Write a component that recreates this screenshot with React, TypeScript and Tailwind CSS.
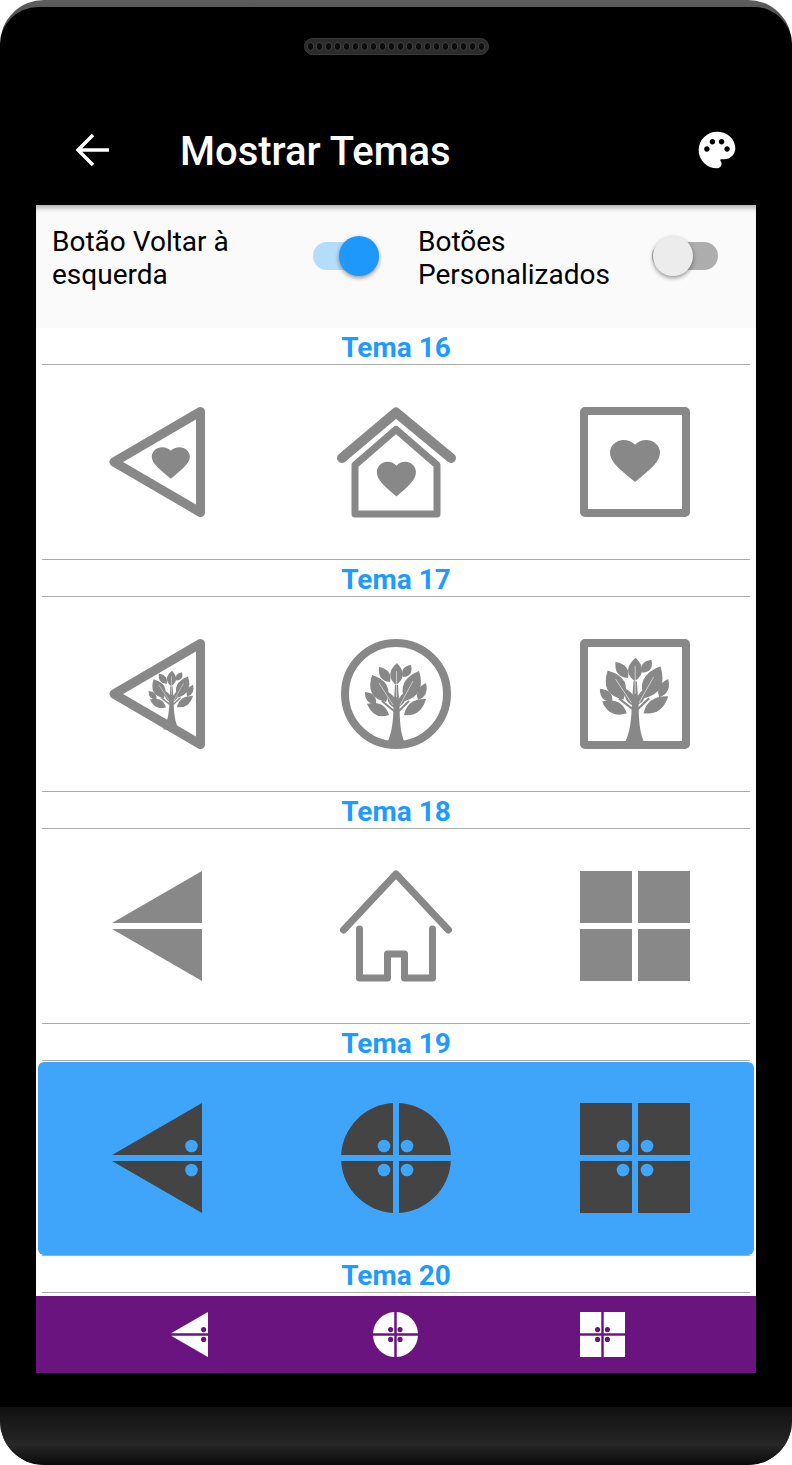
import type { ReactNode } from 'react'
import { MdPalette } from 'react-icons/md'

const HEART = 'M12 21.35l-1.45-1.32C5.4 15.36 2 12.28 2 8.5 2 5.42 4.42 3 7.5 3c1.74 0 3.41.81 4.5 2.09C13.09 3.81 14.76 3 16.5 3 19.58 3 22 5.42 22 8.5c0 3.78-3.4 6.86-8.55 11.54L12 21.35z'

/* leaf between two points, w = widest part */
function leaf(x1: number, y1: number, x2: number, y2: number, w: number) {
  const mx = x1 + (x2 - x1) * 0.55
  const my = y1 + (y2 - y1) * 0.55
  const len = Math.hypot(x2 - x1, y2 - y1)
  const nx = (-(y2 - y1) / len) * w * 1.05
  const ny = ((x2 - x1) / len) * w * 1.05
  return `M${x1} ${y1}Q${mx + nx} ${my + ny} ${x2} ${y2}Q${mx - nx} ${my - ny} ${x1} ${y1}Z`
}

const LEAVES = [
  leaf(56, 24, 55, 46, 12),
  leaf(31, 36, 45, 63, 16),
  leaf(78, 32, 64, 62, 16),
  leaf(38, 28, 49, 43, 9),
  leaf(70, 26, 62, 38, 8),
  leaf(24, 53, 35, 65, 8),
  leaf(85, 44, 77, 61, 8),
  leaf(26, 65, 48, 76, 11),
  leaf(85, 60, 63, 76, 11),
  leaf(47, 53, 54, 69, 7),
  leaf(64, 53, 58, 68, 6),
]

function Tree({ transform }: { transform?: string }) {
  return (
    <g transform={transform}>
      {LEAVES.map((d, i) => (
        <path key={i} d={d} />
      ))}
      <path d="M44 108C50 97 52 88 52.5 68L54 46H57L58.5 68C59 88 60 97 66 108Z" />
      <path d="M53 72 41 62M58 72 68 62" fill="none" stroke="currentColor" strokeWidth="2" />
      <path d="M52 66 38 44M59 66 72 42M55.5 58V32" fill="none" stroke="white" strokeWidth="0.8" strokeOpacity="0.7" />
    </g>
  )
}

function Icon({ children, size = 110 }: { children: ReactNode; size?: number }) {
  return (
    <svg width={size} height={size} viewBox="0 0 110 110" className="overflow-visible" fill="currentColor">
      {children}
    </svg>
  )
}

/* ─── Outline shapes ─── */
function TriangleOutline() {
  return <path d="M12 55 98.5 4.5V105.5Z" fill="none" stroke="currentColor" strokeWidth="9" strokeLinejoin="round" />
}

function SquareOutline() {
  return <rect x="4" y="4" width="102" height="102" rx="1" fill="none" stroke="currentColor" strokeWidth="8" strokeLinejoin="round" />
}

function QuadTriangle() {
  return (
    <>
      <path d="M10 52 100 0V52Z" />
      <path d="M10 58H100V110Z" />
    </>
  )
}

function QuadCircle() {
  return (
    <>
      <path d="M52 52H0.1A55 55 0 0 1 52 0.1Z" />
      <path d="M58 52V0.1A55 55 0 0 1 109.9 52Z" />
      <path d="M52 58V109.9A55 55 0 0 1 0.1 58Z" />
      <path d="M58 58H109.9A55 55 0 0 1 58 109.9Z" />
    </>
  )
}

function QuadSquare() {
  return (
    <>
      <rect width="52" height="52" />
      <rect x="58" width="52" height="52" />
      <rect y="58" width="52" height="52" />
      <rect x="58" y="58" width="52" height="52" />
    </>
  )
}

function Dots({ xs, color }: { xs: number[]; color: string }) {
  return (
    <>
      {xs.map((x) => (
        <g key={x} fill={color}>
          <circle cx={x} cy="43" r="6.3" />
          <circle cx={x} cy="67" r="6.3" />
        </g>
      ))}
    </>
  )
}

/* ─── Rows ─── */
function Label({ children }: { children: ReactNode }) {
  return (
    <div className="h-[36px] pt-[3px] flex items-center justify-center font-bold text-[28px] text-[#1e9bfc]">
      {children}
    </div>
  )
}

function Line() {
  return <div className="h-px mx-[6px] bg-[#ababab]" />
}

function IconRow({ children, active }: { children: ReactNode; active?: boolean }) {
  return (
    <div
      className={
        active
          ? 'mx-[2px] mt-px h-[193px] pb-[1px] grid grid-cols-3 place-items-center rounded-[6px] bg-[#3fa5fa] text-[#444444]'
          : 'mx-[2px] h-[194px] grid grid-cols-3 place-items-center text-[#888888]'
      }
    >
      {children}
    </div>
  )
}

function Toggle({ on }: { on?: boolean }) {
  return (
    <div className={`relative w-[66px] h-[28px] rounded-full ${on ? 'bg-[#b3dcfd]' : 'bg-[#adadad]'}`}>
      <div
        className={`absolute top-[-6px] w-[40px] h-[40px] rounded-full shadow-[0_2px_4px_rgba(0,0,0,0.4)] ${
          on ? 'right-0 bg-[#1e98fa]' : 'left-px bg-[#ececec]'
        }`}
      />
    </div>
  )
}

function Speaker() {
  return (
    <div className="mx-auto w-[185px] h-[17px] rounded-full bg-[#2b2b2b] border border-[#3a3a3a] flex items-center justify-center gap-[1.5px]">
      {Array.from({ length: 20 }).map((_, i) => (
        <span key={i} className="w-[7.5px] h-[9px] rounded-full bg-[#0c0c0c] border border-[#444444]" />
      ))}
    </div>
  )
}

export default function App() {
  return (
    <div className="w-[792px] h-[1465px] bg-white font-['Roboto',sans-serif]">
      <div className="h-full rounded-[44px] overflow-hidden flex flex-col bg-[linear-gradient(#5e5e5e,#2a2a2a_60px)]">
        <div className="mt-[7px] h-[1400px] rounded-t-[38px] bg-black flex flex-col shrink-0">
          <div className="pt-[31px]">
            <Speaker />
          </div>

          {/* header */}
          <div className="mt-[62px] mx-[36px] h-[88px] pb-[20px] flex items-center shrink-0">
            <svg width="36" height="36" viewBox="0 0 36 36" className="ml-[39px] mb-[3px]" fill="none" stroke="white" strokeWidth="3.5">
              <path d="M34 18H4M18 3 3 18 18 33" />
            </svg>
            <h1 className="ml-[69px] mt-[1px] text-[40px] font-medium text-white leading-none">Mostrar Temas</h1>
            <div className="ml-auto mr-[17px] mb-[3px] text-white">
              <MdPalette size={44} />
            </div>
          </div>

          <div className="mx-[36px] flex-1 flex flex-col">
            {/* toggles */}
            <div className="h-[123px] bg-[#fafafa] shadow-[inset_0_6px_5px_-3px_rgba(0,0,0,0.3)] flex pt-[20px] text-[28px] leading-[33px] text-black">
              <div className="w-[382px] pl-[16px] pr-[39px] flex justify-between">
                <span className="w-[210px]">Botão Voltar à esquerda</span>
                <div className="mt-[17px]"><Toggle on /></div>
              </div>
              <div className="flex-1 pr-[38px] flex justify-between">
                <span className="w-[210px]">Botões Personalizados</span>
                <div className="mt-[17px]"><Toggle /></div>
              </div>
            </div>

            {/* list */}
            <div className="bg-white pb-[3px]">
              <Label>Tema 16</Label>
              <Line />
              <IconRow>
                <Icon>
                  <TriangleOutline />
                  <path d={HEART} transform="translate(46 35) scale(1.9 1.72)" />
                </Icon>
                <Icon>
                  <path d="M1 51 55 5.5 110 51" fill="none" stroke="currentColor" strokeWidth="10" strokeLinecap="round" strokeLinejoin="round" />
                  <path d="M14 58 55 22.5 96 58V107H14Z" fill="none" stroke="currentColor" strokeWidth="7" strokeLinejoin="round" />
                  <path d={HEART} transform="translate(32 49) scale(1.95 1.9)" />
                </Icon>
                <Icon>
                  <SquareOutline />
                  <path d={HEART} transform="translate(25 26) scale(2.5 2.3)" />
                </Icon>
              </IconRow>
              <Line />

              <Label>Tema 17</Label>
              <Line />
              <IconRow>
                <Icon>
                  <TriangleOutline />
                  <Tree transform="translate(29 15) scale(0.73 0.7)" />
                </Icon>
                <Icon>
                  <circle cx="55" cy="55" r="51" fill="none" stroke="currentColor" strokeWidth="8" />
                  <Tree />
                </Icon>
                <Icon>
                  <SquareOutline />
                  <Tree transform="translate(-7 -7) scale(1.12 1.07)" />
                </Icon>
              </IconRow>
              <Line />

              <Label>Tema 18</Label>
              <Line />
              <IconRow>
                <Icon><QuadTriangle /></Icon>
                <Icon>
                  <path
                    d="M2.5 59 55 3 107.5 59M18.5 58V107H46.5V83H63.5V107H91.5V58"
                    fill="none"
                    stroke="currentColor"
                    strokeWidth="7"
                    strokeLinecap="round"
                    strokeLinejoin="round"
                  />
                </Icon>
                <Icon><QuadSquare /></Icon>
              </IconRow>
              <Line />

              <Label>Tema 19</Label>
              <Line />
              <IconRow active>
                <Icon>
                  <QuadTriangle />
                  <Dots xs={[89.5]} color="#3fa5fa" />
                </Icon>
                <Icon>
                  <QuadCircle />
                  <Dots xs={[43, 66]} color="#3fa5fa" />
                </Icon>
                <Icon>
                  <QuadSquare />
                  <Dots xs={[43, 67]} color="#3fa5fa" />
                </Icon>
              </IconRow>
              <Line />

              <Label>Tema 20</Label>
              <Line />
            </div>

            {/* bottom nav */}
            <div className="h-[77px] pr-[1px] bg-[#6a1480] flex items-center justify-center gap-[161.5px] text-white">
              <Icon size={45}>
                <QuadTriangle />
                <Dots xs={[89.5]} color="#6a1480" />
              </Icon>
              <Icon size={45}>
                <QuadCircle />
                <Dots xs={[43, 66]} color="#6a1480" />
              </Icon>
              <Icon size={45}>
                <QuadSquare />
                <Dots xs={[43, 67]} color="#6a1480" />
              </Icon>
            </div>
          </div>
          <div className="h-[34px] shrink-0" />
        </div>
        <div className="flex-1 bg-[linear-gradient(#101010,#272727_65%,#0a0a0a)]" />
      </div>
    </div>
  )
}
